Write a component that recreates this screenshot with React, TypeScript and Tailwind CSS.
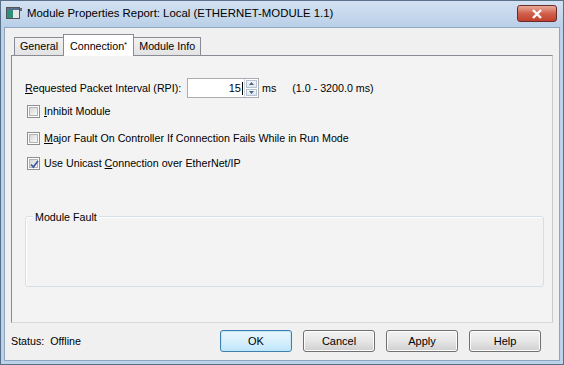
import React from "react";

const F = { fontFamily: '"Liberation Sans", Arial, sans-serif' };

function Check({ checked }: { checked?: boolean }) {
  return (
    <div className="w-[13px] h-[13px] border border-[#8e8f8f] bg-white p-[1px] shrink-0">
      <div className="w-full h-full border border-[#b4b4b4] bg-gradient-to-br from-[#d8d8d8] to-[#f8f8f8] relative">
        {checked && (
          <svg className="absolute left-[-1px] top-[-1px]" width="11" height="11" viewBox="0 0 11 11">
            <path d="M2 5.5 L4.3 8 L9 2" fill="none" stroke="#3d5aa8" strokeWidth="1.8" />
          </svg>
        )}
      </div>
    </div>
  );
}

function Btn({ label, def }: { label: string; def?: boolean }) {
  return (
    <div
      className={
        "w-[72px] h-[22px] rounded-[3px] border flex items-center justify-center text-[11px] text-black " +
        (def
          ? "border-[#3c7fb1] bg-gradient-to-b from-[#eaf6fd] via-[#d9f0fc] to-[#bee6fd] shadow-[inset_0_0_0_1px_#c4e5f6]"
          : "border-[#707070] bg-gradient-to-b from-[#f2f2f2] via-[#e6e6e6] to-[#cfcfcf] shadow-[inset_0_0_0_1px_#fcfcfc]")
      }
    >
      {label}
    </div>
  );
}

export default function App() {
  return (
    <div style={F} className="w-[564px] h-[365px] bg-[#bcd2ea] border border-[#5a7088] flex flex-col text-[10.7px] text-black">
      {/* Title bar */}
      <div className="h-[26px] flex items-center pl-[5px] pr-[6px] shrink-0 bg-gradient-to-b from-[#d3e2f2] to-[#b9cfe8]">
        <svg width="16" height="14" viewBox="0 0 16 14" className="shrink-0">
          <rect x="0.5" y="0.5" width="13" height="11" fill="#e8e8e8" stroke="#555" />
          <rect x="1" y="3" width="6" height="8" fill="#2f8f7a" />
          <rect x="1" y="1" width="12" height="2" fill="#5b6f8f" />
          <rect x="14.5" y="1" width="1" height="3" fill="#000" />
        </svg>
        <span className="ml-[5px] text-[11.4px] text-black flex-1">Module Properties Report: Local (ETHERNET-MODULE 1.1)</span>
        <div className="w-[40px] h-[17px] mt-[-1px] rounded-[3px] border border-[#6b2b2b] bg-gradient-to-b from-[#e9a99a] via-[#d0604c] to-[#c2402c] flex items-center justify-center">
          <svg width="12" height="10" viewBox="0 0 12 10">
            <path d="M2 1 L10 9 M10 1 L2 9" stroke="#fff" strokeWidth="2.4" />
          </svg>
        </div>
      </div>
      {/* Client */}
      <div className="flex-1 mx-[3px] mb-[3px] bg-[#f0f0f0] border border-[#8fa6bf] flex flex-col">
        {/* Tabs */}
        <div className="h-[27px] flex items-end pl-[9px] relative z-10">
          <div className="h-[18px] px-[5px] border border-b-0 border-[#898c95] bg-gradient-to-b from-[#f2f2f2] to-[#e3e3e3] flex items-center">General</div>
          <div className="h-[22px] mb-[-1px] px-[6px] border border-b-0 border-[#898c95] bg-white pt-[3px] -mx-[1px] relative z-10 whitespace-nowrap">
            Connection<span className="text-[8px] relative top-[-3px]">*</span>
          </div>
          <div className="h-[18px] px-[5px] border border-b-0 border-[#898c95] bg-gradient-to-b from-[#f2f2f2] to-[#e3e3e3] flex items-center">Module Info</div>
        </div>
        <div className="h-[268px] ml-[6px] mr-[6px] border border-[#898c95] border-b-[#d9d9d9] border-r-[#c9c9c9] bg-[#f3f3f3] flex flex-col pl-[13px]">
          <div className="flex items-center mt-[22px] h-[20px]">
            <span className="w-[162px]">
              <u>R</u>equested Packet Interval (RPI):
            </span>
            <div className="w-[72px] h-[20px] border border-[#abadb3] bg-white flex items-stretch">
              <div className="flex-1 flex items-center justify-end pr-[1px] text-[11px]">
                15<span className="w-[1px] h-[13px] bg-black ml-[1px]" />
              </div>
              <div className="w-[14px] flex flex-col border-l border-[#d0d6de] p-[1px] gap-[1px]">
                <div className="flex-1 bg-gradient-to-b from-[#f3f6fa] to-[#dfe6ee] border border-[#b6c2d0] flex items-center justify-center">
                  <svg width="5" height="3" viewBox="0 0 5 3"><path d="M0 3 L2.5 0 L5 3Z" fill="#4d6185" /></svg>
                </div>
                <div className="flex-1 bg-gradient-to-b from-[#f3f6fa] to-[#dfe6ee] border border-[#b6c2d0] flex items-center justify-center">
                  <svg width="5" height="3" viewBox="0 0 5 3"><path d="M0 0 L2.5 3 L5 0Z" fill="#4d6185" /></svg>
                </div>
              </div>
            </div>
            <span className="ml-[3px]">ms</span>
            <span className="ml-[16px]">(1.0 - 3200.0 ms)</span>
          </div>
          <div className="flex items-center gap-[4px] mt-[5px] ml-[2px] h-[16px]">
            <Check />
            <span><u>I</u>nhibit Module</span>
          </div>
          <div className="flex items-center gap-[4px] mt-[11px] ml-[2px] h-[16px]">
            <Check />
            <span><u>M</u>ajor Fault On Controller If Connection Fails While in Run Mode</span>
          </div>
          <div className="flex items-center gap-[4px] mt-[9px] ml-[2px] h-[16px]">
            <Check checked />
            <span>Use Unicast <u>C</u>onnection over EtherNet/IP</span>
          </div>
          <div className="relative mt-[45px] mr-[8px] h-[71px] border border-[#d5dfe5] rounded-[3px] shadow-[inset_1px_1px_0_#ffffff]">
            <span className="absolute left-[7px] top-[-8px] px-[2px] bg-[#f3f3f3]">Module Fault</span>
          </div>
        </div>
        {/* Footer */}
        <div className="flex-1 flex items-center pl-[6px] pr-[18px] pb-[1px]">
          <span className="flex-1">Status:&nbsp; Offline</span>
          <div className="flex gap-[11px]">
            <Btn label="OK" def />
            <Btn label="Cancel" />
            <Btn label="Apply" />
            <Btn label="Help" />
          </div>
        </div>
      </div>
    </div>
  );
}
